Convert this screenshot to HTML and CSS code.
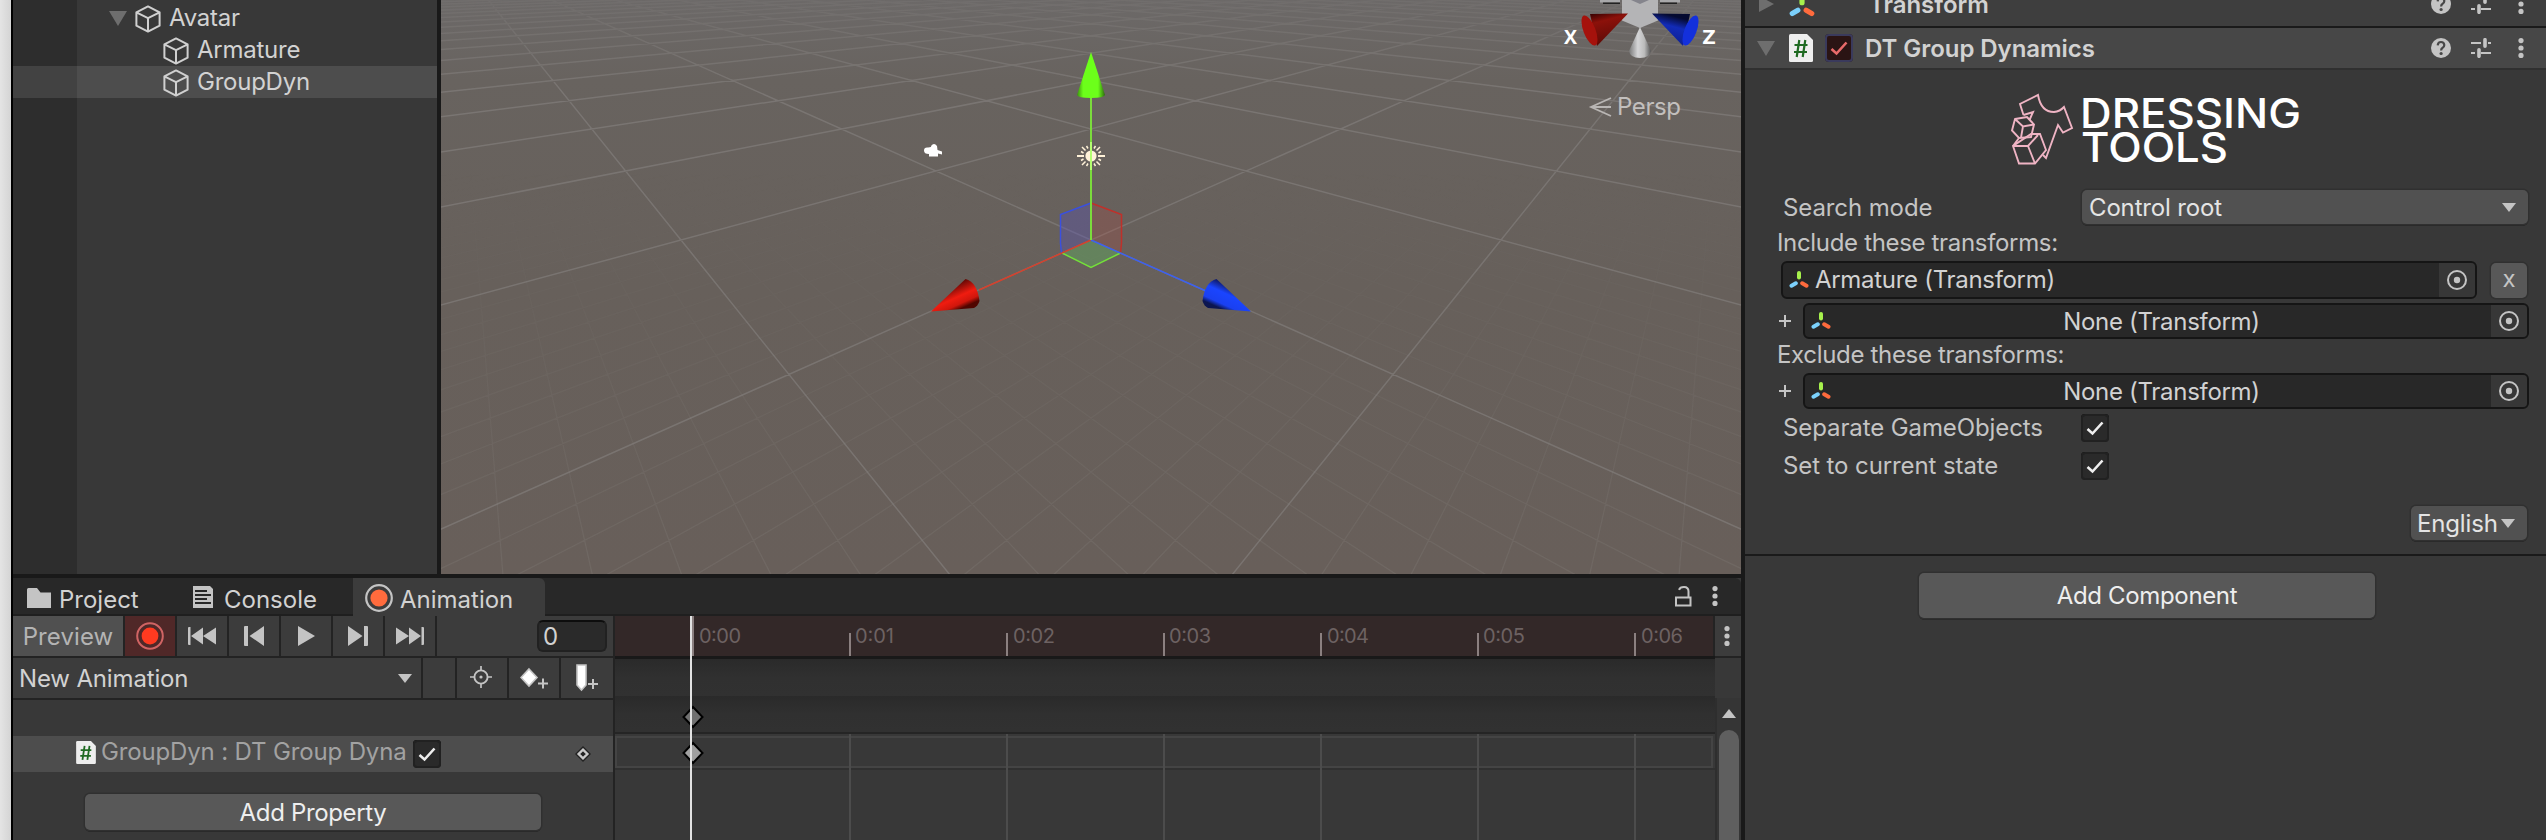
FILE: index.html
```html
<!DOCTYPE html>
<html lang="en">
<head>
<meta charset="utf-8">
<title>Editor</title>
<link rel="stylesheet" href="styles.css">
</head>
<body>
<svg class="defs" width="0" height="0">
  <defs>
    <symbol id="cube" viewBox="0 0 26 28"><path d="M13 1.4 24.6 7.3V20.7L13 26.6 1.4 20.7V7.3ZM1.4 7.3 13 13.2 24.6 7.3M13 13.2V26.6" fill="none" stroke="#d0d0d0" stroke-width="2" stroke-linejoin="round"/></symbol>
    <symbol id="script" viewBox="0 0 24 28"><path d="M1.500 0H18L24 6V26.500Q24 28 22.500 28H1.500Q0 28 0 26.500V1.500Q0 0 1.500 0Z" fill="#eee"/><path d="M10.300 6 7.700 23M16.300 6 13.700 23M5.500 11H18.500M5 18H18" fill="none" stroke="#1f6a22" stroke-width="2.200"/></symbol>
    <symbol id="axes" viewBox="0 0 20 18"><g fill="none" stroke-width="4" stroke-linecap="round"><path d="M10 2V6.500" stroke="#a6f04c"/><path d="M6.800 12.300 2.500 14.700" stroke="#7bd0fb"/><path d="M13.200 12.300 17.500 14.700" stroke="#ff6b3d"/></g></symbol>
    <symbol id="check" viewBox="0 0 28 28"><path d="M6.500 15 11.500 19.500 21.500 8.500" fill="none" stroke="currentColor" stroke-width="2.600"/></symbol>
    <symbol id="dots" viewBox="0 0 6 20"><circle cx="3" cy="2.600" r="2.600"/><circle cx="3" cy="10" r="2.600"/><circle cx="3" cy="17.400" r="2.600"/></symbol>
    <symbol id="help" viewBox="0 0 20 20"><circle cx="10" cy="10" r="10"/><path d="M6.700 7.300Q7 4 10 4T13.300 7Q13.300 8.600 11.700 9.700 10.100 10.700 10.100 12.500" fill="none" stroke="#474747" stroke-width="2.200"/><circle cx="10.100" cy="15.500" r="1.600" fill="#474747"/></symbol>
    <symbol id="sliders" viewBox="0 0 20 20"><path d="M0 5H10M17 5H20M0 15H4M10 15H20" stroke="#c4c4c4" stroke-width="2"/><path d="M14 1.700V8.300M8 11.700V18.300" stroke="#c4c4c4" stroke-width="3.600" stroke-linecap="round"/></symbol>
    <symbol id="target" viewBox="0 0 20 20"><circle cx="10" cy="10" r="9" fill="none" stroke="#c4c4c4" stroke-width="2"/><circle cx="10" cy="10" r="3.200"/></symbol>
    <symbol id="tri" viewBox="0 0 14 9"><path d="M0 0H14L7 9Z"/></symbol>
  </defs>
</svg>

<div class="app">
  <div class="desktop-edge"></div>

  <div class="workspace">
    <div class="upper">
      <div class="hierarchy">
        <div class="row row-root"><svg class="fold" width="18" height="15"><path d="M0 0H18L9 15Z"/></svg><svg class="cube" width="26" height="28"><use href="#cube"/></svg><span>Avatar</span></div>
        <div class="row row-child"><svg class="cube" width="26" height="28"><use href="#cube"/></svg><span>Armature</span></div>
        <div class="row row-child selected"><svg class="cube" width="26" height="28"><use href="#cube"/></svg><span>GroupDyn</span></div>
      </div>

      <svg class="scene" width="1300" height="574" viewBox="441 0 1300 574">
        <defs>
          <linearGradient id="sky" x1="0" y1="0" x2="0" y2="1"><stop offset="0" stop-color="#6c6968"/><stop offset=".14" stop-color="#68635f"/><stop offset=".5" stop-color="#67605b"/><stop offset="1" stop-color="#685f5a"/></linearGradient>
          <linearGradient id="fadeFar" gradientUnits="userSpaceOnUse" x1="0" y1="0" x2="0" y2="90"><stop offset="0" stop-color="#555"/><stop offset="1" stop-color="#fff"/></linearGradient>
          <linearGradient id="fadeNear" gradientUnits="userSpaceOnUse" x1="0" y1="170" x2="0" y2="574"><stop offset="0" stop-color="#000"/><stop offset=".3" stop-color="#444"/><stop offset="1" stop-color="#fff"/></linearGradient>
          <mask id="mFar" maskUnits="userSpaceOnUse" x="441" y="0" width="1300" height="574"><rect x="441" width="1300" height="574" fill="url(#fadeFar)"/></mask>
          <mask id="mNear" maskUnits="userSpaceOnUse" x="441" y="0" width="1300" height="574"><rect x="441" width="1300" height="574" fill="url(#fadeNear)"/></mask>
          <linearGradient id="gGreen"><stop offset="0" stop-color="#3c8f10"/><stop offset=".22" stop-color="#6cff1a"/><stop offset=".75" stop-color="#6cff1a"/><stop offset="1" stop-color="#2f6a10"/></linearGradient>
          <linearGradient id="gRed" gradientUnits="userSpaceOnUse" x1="948" y1="288" x2="958" y2="310"><stop offset="0" stop-color="#6a0a06"/><stop offset=".5" stop-color="#f01c10"/><stop offset=".8" stop-color="#d0160c"/><stop offset="1" stop-color="#500500"/></linearGradient>
          <linearGradient id="gBlue" gradientUnits="userSpaceOnUse" x1="1234" y1="288" x2="1224" y2="310"><stop offset="0" stop-color="#101c70"/><stop offset=".35" stop-color="#1a45ff"/><stop offset=".8" stop-color="#1a40f0"/><stop offset="1" stop-color="#0c1650"/></linearGradient>
          <linearGradient id="gWhite"><stop offset="0" stop-color="#777"/><stop offset=".4" stop-color="#d5d5d7"/><stop offset=".7" stop-color="#bbb"/><stop offset="1" stop-color="#555"/></linearGradient>
          <linearGradient id="gDarkRed" x1="0" y1="0" x2=".3" y2="1"><stop offset="0" stop-color="#300"/><stop offset=".3" stop-color="#8c110a"/><stop offset="1" stop-color="#5c0a06"/></linearGradient>
          <linearGradient id="gDarkBlue" x1=".3" y1="0" x2="0" y2="1"><stop offset="0" stop-color="#050a30"/><stop offset=".3" stop-color="#122bb8"/><stop offset="1" stop-color="#0c1c80"/></linearGradient>
        </defs>
        <rect x="441" width="1300" height="574" fill="url(#sky)"/>
        <g mask="url(#mNear)"><path id="gridMinor" class="grid-minor"/></g>
        <g mask="url(#mFar)"><path id="gridMajor" class="grid-major"/></g>

        <g stroke-width="1.500">
          <path d="M1091 203 1060.500 214.500 1061.500 253 1091 240Z" fill="#5a50b8" fill-opacity=".36"/>
          <path d="M1091 203 1121.500 214.500 1120.500 253 1091 240Z" fill="#b04a40" fill-opacity=".26"/>
          <path d="M1091 240 1062 253 1091 267.500 1120.500 253Z" fill="#60c060" fill-opacity=".36"/>
          <path d="M1091 203 1060.500 214.500V243L1061.500 253" fill="none" stroke="#3a50e0"/>
          <path d="M1091 203 1121.500 214.500V243L1120.500 253" fill="none" stroke="#c0302a"/>
          <path d="M1062 253 1091 267.500 1120.500 253" fill="none" stroke="#74e03a"/>
          <path d="M1091 240 979 290" stroke="#d6402c"/>
          <path d="M1091 240 1206 291" stroke="#3c60f0"/>
        </g>
        <g class="sun">
          <path d="M1077 156H1084M1098 156H1105M1091 142V149M1091 163V170" stroke-width="2"/>
          <path d="M1082 147 1085.500 150.500M1096.500 161.500 1100 165M1100 147 1096.500 150.500M1085.500 161.500 1082 165M1086.500 146 1088 148.500M1095.500 146 1094 148.500M1086.500 166 1088 163.500M1095.500 166 1094 163.500M1081 151.500 1083.500 153M1101 151.500 1098.500 153M1081 160.500 1083.500 159M1101 160.500 1098.500 159" stroke-width="1.500"/>
          <circle cx="1091" cy="156" r="5.600"/>
        </g>
        <path d="M1091 97V240" stroke="#7bdc3c" stroke-width="2"/>
        <path d="M1091 142V170" stroke="#b4ff70" stroke-width="2"/>
        <path d="M1091 52 1105 95Q1104 98 1091 98T1077 95Z" fill="url(#gGreen)"/>
        <path d="M931 311.500 965.500 279Q977 282 979.500 301 978 306 974 308Z" fill="url(#gRed)"/>
        <path d="M1251 311.500 1216.500 279Q1205 282 1202.500 301 1204 306 1208 308Z" fill="url(#gBlue)"/>
        <path d="M928 147.500Q932 147 931 146 934 142 937 146L937.500 150 942 151.500V154.500L938 153.500V156.500H929V154Q924 154 924 150.500T928 147.500Z" fill="#fff"/>

        <path d="M1600 1H1620M1660 1H1680" stroke="#a8a8aa" stroke-width="3"/>
        <path d="M1603 3.300H1620M1660 3.300H1677" stroke="#222" stroke-width="1.600"/>
        <path d="M1622 0H1658V20.500L1640 28 1622 20.500Z" fill="#b4b4b6"/>
        <path d="M1631 0H1649L1640 4Z" fill="#84848c"/>
        <path d="M1628 13.500 1590 14 1597 46Z" fill="url(#gDarkRed)"/>
        <ellipse cx="1589.500" cy="30.500" rx="6" ry="16" transform="rotate(-21 1589.500 30.500)" fill="#a5120c"/>
        <path d="M1652 13.500 1690 14 1683 46Z" fill="url(#gDarkBlue)"/>
        <ellipse cx="1690.500" cy="30.500" rx="6" ry="16" transform="rotate(21 1690.500 30.500)" fill="#1330dc"/>
        <path d="M1640 27 1651 51Q1650 58 1640 58T1629 51Z" fill="url(#gWhite)"/>
        <text class="axis" x="1564" y="44" textLength="13" lengthAdjust="spacingAndGlyphs">X</text>
        <text class="axis" x="1702.500" y="44" textLength="13" lengthAdjust="spacingAndGlyphs">Z</text>
        <path d="M1611 98 1591 107 1611 116M1593 107H1611" fill="none" stroke="#b9b6b4" stroke-width="1.800"/>
        <text class="persp" x="1617" y="115" textLength="64">Persp</text>
      </svg>
    </div>

    <div class="tabs">
      <div class="tab tab-project"><svg width="24" height="20"><path d="M0 1.500Q0 0 1.500 0H10L13.500 4.500H24V20H0Z"/></svg><span>Project</span></div>
      <div class="tab tab-console"><svg width="20" height="22"><path d="M0 0H17L20 3V22H0Z"/><path d="M2 5H14M2 9H18M2 13H14M2 17H18" stroke="#282828" stroke-width="1.800"/></svg><span>Console</span></div>
      <div class="tab tab-animation"><svg width="28" height="28"><circle cx="14" cy="14" r="12.800" fill="none" stroke="#c4c4c4" stroke-width="2.200"/><circle cx="14" cy="14" r="8.600" fill="#ff6b3d"/></svg><span>Animation</span></div>
      <div class="tab-tools"><svg width="17" height="21"><path d="M1 11.500H15.500V19.500H1ZM13.500 11V5.500Q13.500 1 9 1 5 1 4 3.800" fill="none" stroke="#c4c4c4" stroke-width="2"/></svg><svg width="6" height="20"><use href="#dots"/></svg></div>
    </div>

    <div class="animation">
      <div class="anim-left">
        <div class="toolbar">
          <div class="tb preview">Preview</div>
          <div class="tb record"><svg width="28" height="28"><circle cx="14" cy="14" r="12.800" fill="none" stroke="#d06464" stroke-width="2"/><circle cx="14" cy="14" r="8.400" fill="#ff3a20"/></svg></div>
          <div class="tb"><svg width="28" height="18"><path d="M0 1Q0 0 1 0H2.500V18H1Q0 18 0 17ZM3 9 15 .500V17.500ZM15 9 28 .500V17.500Z"/></svg></div>
          <div class="tb"><svg width="20" height="20"><path d="M0 1Q0 0 1 0H4V20H1Q0 20 0 19ZM5.500 10 20 0V20Z"/></svg></div>
          <div class="tb"><svg width="17" height="20"><path d="M0 0 17 10 0 20Z"/></svg></div>
          <div class="tb"><svg width="20" height="20"><path d="M20 1Q20 0 19 0H16V20H19Q20 20 20 19ZM14.500 10 0 0V20Z"/></svg></div>
          <div class="tb"><svg width="28" height="18"><path d="M28 1Q28 0 27 0H25.500V18H27Q28 18 28 17ZM25 9 13 .500V17.500ZM13 9 0 .500V17.500Z"/></svg></div>
          <div class="frame-box"><div class="frame">0</div></div>
        </div>
        <div class="toolbar">
          <div class="tb clip"><span>New Animation</span><svg width="14" height="9"><use href="#tri"/></svg></div>
          <div class="tb spacer"></div>
          <div class="tb"><svg class="aim" width="22" height="22"><circle cx="11" cy="11" r="6.600" fill="none" stroke="#c4c4c4" stroke-width="1.900"/><circle cx="11" cy="11" r="1.600"/><path d="M11 0V5M11 17V22M0 11H5M17 11H22" stroke="#c4c4c4" stroke-width="1.700"/></svg></div>
          <div class="tb"><svg width="28" height="22"><path d="M9 2 17 10.500 9 19 1 10.500Z" fill="#fff" stroke="#c4c4c4" stroke-width="1.600"/><path d="M18 16.500H28M23 11.500V21.500" stroke="#c4c4c4" stroke-width="2"/></svg></div>
          <div class="tb last"><svg width="22" height="28"><path d="M1 1H10V21L5.500 26 1 21Z" fill="#fff" stroke="#c4c4c4" stroke-width="1.600"/><path d="M12 20H22M17 15V25" stroke="#c4c4c4" stroke-width="2"/></svg></div>
        </div>
        <div class="prop-row">
          <svg class="p-icon" width="20" height="23"><use href="#script"/></svg><span>GroupDyn : DT Group Dyna</span>
          <div class="checkbox"><svg width="28" height="28"><use href="#check"/></svg></div>
          <svg class="key" width="18" height="18"><path d="M9 1 17 9 9 17 1 9Z" fill="#222"/><path d="M9 4.600 13.400 9 9 13.400 4.600 9Z" fill="none" stroke="#c8c8c8" stroke-width="2.400"/></svg>
        </div>
        <div class="button add-property">Add Property</div>
      </div>

      <svg class="timeline" width="1100" height="224" viewBox="615 616 1100 224">
        <defs><linearGradient id="band" x1="0" y1="0" x2="0" y2="1"><stop offset="0" stop-color="#2a2a2a"/><stop offset=".5" stop-color="#303030"/><stop offset="1" stop-color="#313131"/></linearGradient></defs>
        <rect x="615" y="616" width="1100" height="224" fill="#383838"/>
        <rect x="615" y="616" width="1098" height="40" fill="#332828"/>
        <rect x="1713" y="616" width="2" height="40" fill="#232323"/>
        <rect x="615" y="656" width="1100" height="3" fill="#191919"/>
        <rect x="615" y="659" width="1100" height="37" fill="url(#band)"/>
        <rect x="615" y="696" width="1100" height="36" fill="url(#band)"/>
        <rect x="615" y="732" width="1100" height="2" fill="#252525"/>
        <rect x="616" y="737" width="1096" height="30" fill="none" stroke="#444" stroke-width="2"/>
        <rect x="615" y="768" width="1100" height="2" fill="#303030"/>
        <path d="M850 734V840M1007 734V840M1164 734V840M1321 734V840M1478 734V840M1635 734V840" stroke="#4c4c4c" stroke-width="2"/>
        <path d="M693 616V656M850 633V656M1007 633V656M1164 633V656M1321 633V656M1478 633V656M1635 633V656" stroke="#8b8080" stroke-width="2"/>
        <g class="ticks"><text x="699" y="643" textLength="42">0:00</text><text x="855" y="643" textLength="39">0:01</text><text x="1013" y="643" textLength="42">0:02</text><text x="1169" y="643" textLength="42">0:03</text><text x="1327" y="643" textLength="42">0:04</text><text x="1483" y="643" textLength="42">0:05</text><text x="1641" y="643" textLength="42">0:06</text></g>
        <path d="M693 707 702.500 717 693 727 683.500 717Z" fill="#707070" stroke="#000" stroke-width="2"/>
        <path d="M693 743 702.500 753 693 763 683.500 753Z" fill="#a0a0a0" stroke="#000" stroke-width="2"/>
        <path d="M691 616V840" stroke="#e2e2e2" stroke-width="2"/>
      </svg>

      <div class="scroll">
        <div class="scroll-menu"><svg width="6" height="20"><use href="#dots"/></svg></div>
        <div class="scroll-gap"></div>
        <div class="scroll-track"><svg width="14" height="9"><path d="M0 9H14L7 0Z"/></svg><div class="thumb"></div></div>
      </div>
    </div>
  </div>

  <div class="inspector">
    <div class="comp-head head-transform">
      <svg class="fold" width="18" height="18"><path d="M1 1 16 9 1 17Z"/></svg>
      <svg class="h-icon" width="26" height="24"><use href="#axes"/></svg>
      <span class="h-title">Transform</span>
      <div class="h-tools"><svg width="20" height="20"><use href="#help"/></svg><svg width="20" height="20"><use href="#sliders"/></svg><svg width="6" height="20"><use href="#dots"/></svg></div>
    </div>
    <div class="comp-head head-dyn">
      <svg class="fold" width="18" height="15"><path d="M0 0H18L9 15Z"/></svg>
      <svg class="h-icon" width="24" height="28"><use href="#script"/></svg>
      <div class="checkbox red"><svg width="28" height="28"><use href="#check"/></svg></div>
      <span class="h-title">DT Group Dynamics</span>
      <div class="h-tools"><svg width="20" height="20"><use href="#help"/></svg><svg width="20" height="20"><use href="#sliders"/></svg><svg width="6" height="20"><use href="#dots"/></svg></div>
    </div>
    <div class="comp-body">
      <svg class="logo" width="292" height="76" viewBox="2010 92 292 76">
        <g fill="none" stroke="#efb4c4" stroke-width="1.900" stroke-linejoin="miter">
          <path d="M2023.500 115 2020 104 2038 95Q2041 112 2054 112 2060 111.500 2064 107L2072 128 2063 132.500 2058 125 2046 158 2043 155M2023.500 115 2033 112 2029.500 120"/>
          <path d="M2015 119 2027 117 2034 124.500 2031 137 2019 138 2012 130.500ZM2015 119 2023 126.500 2034 124.500M2023 126.500 2021 137.500"/>
          <path d="M2013 146 2019 138M2031 134 2040 134 2046 150 2035 163.500H2019L2013 146ZM2013 146H2028L2038 135M2028 146 2035 163.500"/>
        </g>
        <g class="logo-text"><text x="2080" y="128" textLength="221" lengthAdjust="spacingAndGlyphs">DRESSING</text><text x="2081" y="162" textLength="147" lengthAdjust="spacingAndGlyphs">TOOLS</text></g>
      </svg>
      <div class="field search"><span class="label">Search mode</span><div class="select"><span>Control root</span><svg width="14" height="9"><use href="#tri"/></svg></div></div>
      <div class="caption inc">Include these transforms:</div>
      <div class="list-row first"><div class="object"><svg class="ax" width="20" height="18"><use href="#axes"/></svg><span>Armature (Transform)</span><i class="pick"><svg width="20" height="20"><use href="#target"/></svg></i></div><div class="remove">x</div></div>
      <div class="list-row add"><svg class="plus" width="12" height="12"><path d="M0 6H12M6 0V12"/></svg><div class="object none"><svg class="ax" width="20" height="18"><use href="#axes"/></svg><span>None (Transform)</span><i class="pick"><svg width="20" height="20"><use href="#target"/></svg></i></div></div>
      <div class="caption exc">Exclude these transforms:</div>
      <div class="list-row add"><svg class="plus" width="12" height="12"><path d="M0 6H12M6 0V12"/></svg><div class="object none"><svg class="ax" width="20" height="18"><use href="#axes"/></svg><span>None (Transform)</span><i class="pick"><svg width="20" height="20"><use href="#target"/></svg></i></div></div>
      <div class="field toggle"><span class="label">Separate GameObjects</span><div class="checkbox"><svg width="28" height="28"><use href="#check"/></svg></div></div>
      <div class="field toggle second"><span class="label">Set to current state</span><div class="checkbox"><svg width="28" height="28"><use href="#check"/></svg></div></div>
      <div class="select lang"><span>English</span><svg width="14" height="9"><use href="#tri"/></svg></div>
    </div>
    <div class="button add-component">Add Component</div>
  </div>
</div>
<script src="grid.js"></script>
</body>
</html>
```
FILE: styles.css
```css
* { box-sizing: border-box; }
body { margin: 0; background: #383838; font-family: Inter, "Liberation Sans", sans-serif; font-size: 24px; letter-spacing: -.15px; color: #d2d2d2; overflow: hidden; }
svg { display: block; flex: none; fill: #c4c4c4; }
.defs { position: absolute; }
.app { display: flex; width: 2546px; height: 840px; overflow: hidden; white-space: nowrap; }
.desktop-edge { width: 13px; flex: none; background: linear-gradient(90deg, #e4e4e4, #d4d4d4); border-right: 2px solid #000; }
.workspace { width: 1732px; flex: none; border-right: 4px solid #191919; }
.upper { display: flex; height: 578px; border-bottom: 4px solid #191919; }

.hierarchy { width: 428px; padding-top: 2px; border-right: 4px solid #191919; background: linear-gradient(90deg, #2d2d2d 64px, #383838 64px); }
.row { display: flex; align-items: center; height: 32px; letter-spacing: -.25px; }
.row .cube { margin: 1px 8px 0 0; }
.row span { margin-top: -2px; }
.row-root { padding-left: 96px; }
.row-root .fold { margin-right: 8px; }
.row-child { padding-left: 150px; }
.selected { background: linear-gradient(90deg, #424242 64px, #4d4d4d 64px); }
.fold { fill: #6e6e6e; }

.grid-major { fill: none; stroke: #888583; stroke-opacity: .55; stroke-width: 1.5; }
.grid-minor { fill: none; stroke: #888583; stroke-opacity: .24; stroke-width: 1.3; }
.sun { fill: #fff2d8; stroke: #fff2d8; }
.sun circle { stroke: none; }
.axis { font: 700 19px "Open Sans", sans-serif; fill: #fff; letter-spacing: 0; }
.persp { font-size: 24px; fill: #c2bfbd; letter-spacing: 0; }

.tabs { display: flex; height: 38px; background: #282828; border-bottom: 2px solid #1f1f1f; border-top-right-radius: 6px; }
.tab { display: flex; align-items: center; height: 38px; padding-top: 2px; letter-spacing: 0; }
.tab span { margin-top: 2px; }
.tab-project { width: 166px; padding-left: 14px; gap: 8px; }
.tab-console { width: 174px; padding-left: 14px; gap: 11px; }
.tab-console svg { margin-top: -2px; }
.tab-animation { width: 192px; padding-left: 12px; gap: 7px; background: #3c3c3c; border-top-right-radius: 6px; }
.tab-tools { display: flex; align-items: center; gap: 20px; margin-left: auto; padding-right: 23px; }

.animation { display: flex; height: 224px; }
.anim-left { width: 602px; border-right: 2px solid #232323; background: #383838; }
.toolbar { display: flex; height: 42px; background: #3c3c3c; border-bottom: 2px solid #232323; }
.tb { display: flex; align-items: center; justify-content: center; width: 52px; border-right: 2px solid #232323; }
.tb.preview { width: 112px; background: #505050; color: #b4b4b4; letter-spacing: .1px; }
.tb.record { background: #502828; }
.tb.clip { width: 410px; justify-content: space-between; padding: 0 9px 0 6px; }
.tb.clip span { padding-top: 1px; }
.tb.spacer { width: 34px; }
.aim { margin: -2px 2px 0 0; }
.tb.last { width: 52px; border-right: 0; }
.frame-box { display: flex; align-items: center; justify-content: flex-end; flex: 1; padding-right: 6px; }
.frame { width: 70px; height: 32px; padding-left: 4px; line-height: 29px; background: #2a2a2a; border: 2px solid #212121; border-top-color: #0d0d0d; border-radius: 6px; }
.prop-row { display: flex; align-items: center; height: 36px; margin-top: 36px; padding: 0 21px 0 63px; background: #4d4d4d; color: #a2a2a2; }
.prop-row .p-icon { margin-top: -4px; }
.prop-row span { width: 317px; padding-left: 5px; margin-top: -6px; }
.key { margin-left: auto; }
.checkbox { width: 28px; height: 28px; flex: none; background: #2a2a2a; border-radius: 4px; box-shadow: inset 0 0 0 2px #212121, inset 0 2px 0 #0d0d0d; color: #eee; }
.checkbox.red { background: #2a1414; box-shadow: inset 0 0 0 2px #3a3a5c; color: #e86a6a; }
.button { display: flex; align-items: center; justify-content: center; background: #585858; color: #eee; border-radius: 5px; box-shadow: 0 0 0 1.5px #303030, 0 2px 0 #242424; letter-spacing: -.35px; }
.add-property { width: 456px; height: 36px; margin: 22px 0 0 72px; padding-top: 1px; }
.ticks { font-size: 20px; letter-spacing: 0; fill: #6d6262; }

.scroll { width: 26px; height: 224px; flex: none; display: flex; flex-direction: column; overflow: hidden; }
.scroll-menu { flex: none; height: 42px; padding: 10px 0 0 9px; background: #3c3c3c; border-bottom: 2px solid #232323; }
.scroll-gap { flex: none; height: 40px; background: #383838; }
.scroll-track { flex: none; height: 142px; padding: 11px 2px 0 2px; background: #353535; border-left: 2px solid #2e2e2e; }
.scroll-track svg { margin-left: 3px; }
.thumb { height: 122px; margin-top: 12px; border-radius: 10px; background: #5f5f5f; }

.inspector { width: 801px; flex: none; background: #383838; color: #c4c4c4; }
.comp-head { display: flex; align-items: center; font-weight: 600; color: #d2d2d2; }
.head-transform { height: 28px; padding: 0 0 18px 13px; background: #3e3e3e; border-bottom: 2px solid #1a1a1a; }
.head-transform .h-icon { margin: 4px 54px 0 13px; }
.head-dyn { height: 42px; padding-left: 12px; background: #474747; border-bottom: 2px solid #303030; }
.head-dyn .h-icon { margin: 0 12px 0 14px; }
.head-dyn .h-title { margin-left: 12px; padding-top: 1px; }
.h-title { letter-spacing: -.05px; }
.h-tools { display: flex; gap: 20px; margin-left: auto; padding-right: 22px; }
.h-tools svg:last-child { margin-left: 7px; }

.comp-body { height: 486px; padding-top: 22px; border-bottom: 2px solid #1a1a1a; }
.logo { margin-left: 265px; overflow: visible; }
.logo-text { font: 500 41px Inter, sans-serif; fill: #fff; letter-spacing: 0; }
.field { display: flex; align-items: center; padding-left: 38px; }
.label { width: 298px; letter-spacing: -.1px; }
.search { height: 36px; margin-top: 21px; }
.search .select { width: 446px; height: 34px; margin-left: 1px; }
.select { display: flex; align-items: center; justify-content: space-between; padding: 0 12px 0 7px; background: #515151; border-radius: 5px; color: #e4e4e4; box-shadow: 0 0 0 1.5px #303030, 0 2px 0 #242424; }
.caption { height: 36px; line-height: 36px; padding-left: 32px; letter-spacing: -.33px; }
.exc { height: 34px; line-height: 32px; }
.list-row { display: flex; align-items: center; padding-left: 36px; height: 38px; }
.object { display: flex; align-items: center; width: 696px; height: 38px; padding-left: 6px; background: #282828; border: 2px solid #151515; border-radius: 6px; color: #d2d2d2; letter-spacing: -.3px; }
.object span { margin: -2px 0 0 6px; }
.object .pick { display: flex; align-items: center; justify-content: center; width: 36px; height: 100%; margin-left: auto; background: #373737; border-radius: 0 4px 4px 0; }
.remove { width: 36px; height: 35px; margin-left: 14px; text-align: center; line-height: 32px; font-size: 24px; background: #585858; border-radius: 5px; box-shadow: 0 0 0 1.5px #303030; }
.add { margin-top: 4px; height: 36px; padding-left: 34px; }
.exc + .add { margin-top: 0; }
.plus { margin-right: 12px; }
.plus path { stroke: #c4c4c4; stroke-width: 2; }
.none { width: 726px; height: 36px; padding-left: 6px; }
.none span { flex: 1; text-align: center; margin: 0; padding-left: 1px; }
.toggle { height: 28px; margin-top: 6px; }
.toggle.second { margin-top: 10px; }
.toggle .label { margin: -4px 0 0; }
.toggle .checkbox { margin-top: -2px; }
.lang { width: 116px; height: 34px; margin: 25px 0 0 666px; padding-left: 6px; }
.add-component { width: 456px; height: 45px; margin: 17px 0 0 174px; }
```
FILE: grid.js
```js
// Perspective ground grid: lines of constant u and v projected to the viewport.
const CX = 1091, HORIZON = -43.7, DEPTH = 283.7, SPREAD = 205, FALLOFF = 0.3214;

function project(u, v) {
  const w = 1 - FALLOFF * (u + v);
  return (CX + SPREAD * (u - v) / w).toFixed(2) + ' ' + (HORIZON + DEPTH / w).toFixed(2);
}

function gridPath(step, range, far) {
  let d = '';
  const near = 2.65;
  const count = Math.round(range / step);
  for (let i = -count; i <= count; i++) {
    if (step < 1 && i % 10 === 0) continue;
    const n = i * step;
    if (near - n <= -far) continue;
    d += 'M' + project(n, -far) + 'L' + project(n, near - n);
    d += 'M' + project(-far, n) + 'L' + project(near - n, n);
  }
  return d;
}

document.getElementById('gridMajor').setAttribute('d', gridPath(1, 30, 40));
document.getElementById('gridMinor').setAttribute('d', gridPath(0.1, 4, 6));
```
